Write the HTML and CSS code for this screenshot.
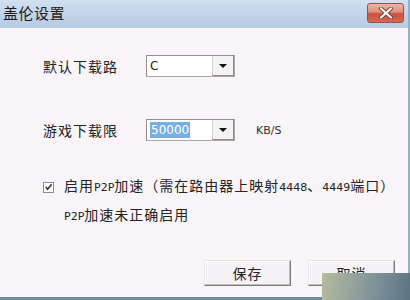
FILE: index.html
```html
<!DOCTYPE html>
<html lang="zh">
<head>
<meta charset="utf-8">
<link rel="stylesheet" href="styles.css">
</head>
<body>
<div class="window">
  <div class="titlebar">
    <span class="title">盖伦设置</span>
    <div class="close">
      <svg width="18" height="12" viewBox="0 0 18 12"><path d="M4 1.5 L14 10.5 M14 1.5 L4 10.5" stroke="#8a3a30" stroke-width="4" stroke-linecap="round"/><path d="M4 1.5 L14 10.5 M14 1.5 L4 10.5" stroke="#ffffff" stroke-width="2.2" stroke-linecap="round"/></svg>
    </div>
  </div>
  <div class="content">
    <div class="row row1">
      <span class="label">默认下载路</span>
      <div class="combo"><span class="value">C</span><span class="drop"><i class="arrow"></i></span></div>
    </div>
    <div class="row row2">
      <span class="label">游戏下载限</span>
      <div class="combo"><span class="value"><span class="sel">50000</span></span><span class="drop"><i class="arrow"></i></span></div>
      <span class="unit">KB/S</span>
    </div>
    <div class="check-row">
      <span class="box"><svg width="10" height="10" viewBox="0 0 10 10"><path d="M2 5 L4 7.5 L8.5 2" stroke="#333" stroke-width="1.8" fill="none"/></svg></span>
      <span class="check-text">启用<span class="lat">P2P</span>加速（需在路由器上映射<span class="lat">4448</span>、<span class="lat">4449</span>端口）</span>
    </div>
    <div class="status"><span class="lat">P2P</span>加速未正确启用</div>
    <div class="buttons">
      <div class="btn">保存</div>
      <div class="btn">取消</div>
    </div>
  </div>
  <div class="watermark"></div>
</div>
</body>
</html>
```
FILE: styles.css
```css
html, body {
  margin: 0;
  padding: 0;
}
body {
  width: 410px;
  height: 300px;
  overflow: hidden;
  font-family: "Noto Sans CJK SC", "Noto Sans", sans-serif;
  color: #222;
}
.window {
  position: relative;
  width: 410px;
  height: 300px;
  box-sizing: border-box;
  background: #f8f4f8;
  border-right: 2px solid #8fb3c9;
  border-bottom: 3px solid #6f8c9c;
  display: flex;
  flex-direction: column;
}
.titlebar {
  height: 28px;
  flex: none;
  display: flex;
  align-items: center;
  justify-content: space-between;
  background: linear-gradient(to bottom, #d2e0f0 0%, #c0d2e8 60%, #b6cae2 100%);
  padding-left: 3px;
}
.title {
  font-size: 15px;
  letter-spacing: 0.5px;
  color: #1c1c1c;
  line-height: 28px;
  margin-top: -2px;
}
.close {
  width: 37px;
  height: 20px;
  margin-right: 4px;
  margin-top: -3px;
  box-sizing: border-box;
  border: 1px solid #9a5048;
  border-radius: 3px;
  background: linear-gradient(to bottom, #eeb4a6 0%, #e08c7a 45%, #c8503c 55%, #d46a54 100%);
  display: flex;
  align-items: center;
  justify-content: center;
}
.content {
  display: flex;
  flex-direction: column;
  padding-left: 43px;
}
.row {
  display: flex;
  align-items: center;
  height: 22px;
}
.row1 { margin-top: 27px; }
.row2 { margin-top: 42px; }
.label {
  width: 103px;
  font-size: 14px;
  letter-spacing: 1px;
  line-height: 22px;
}
.combo {
  width: 89px;
  height: 22px;
  box-sizing: border-box;
  background: #fff;
  border: 1px solid #a9a9a9;
  border-top-color: #8e8e8e;
  border-left-color: #8e8e8e;
  display: flex;
}
.value {
  flex: 1;
  font-family: "DejaVu Sans", "Liberation Sans", sans-serif;
  font-size: 12px;
  line-height: 20px;
  padding-left: 3px;
  color: #222;
}
.sel {
  display: inline-block;
  background: #79aee2;
  color: #fff;
  line-height: 16px;
  padding: 0 1px;
}
.drop {
  width: 22px;
  height: 20px;
  box-sizing: border-box;
  background: #f4f2f4;
  border-left: 1px solid #d0d0d0;
  border-bottom: 1px solid #8a8a8a;
  border-right: 1px solid #8a8a8a;
  display: flex;
  align-items: center;
  justify-content: center;
}
.arrow {
  width: 0;
  height: 0;
  border-left: 4px solid transparent;
  border-right: 4px solid transparent;
  border-top: 4px solid #111;
}
.unit {
  margin-left: 21px;
  font-family: "DejaVu Sans", "Liberation Sans", sans-serif;
  font-size: 11px;
  color: #333;
}
.check-row {
  margin-top: 35px;
  height: 20px;
  display: flex;
  align-items: center;
  width: 346px;
  overflow: hidden;
  white-space: nowrap;
}
.box {
  width: 11px;
  height: 11px;
  flex: none;
  box-sizing: border-box;
  border: 1px solid #8c8c8c;
  background: #fff;
  display: flex;
  align-items: center;
  justify-content: center;
  margin-top: 2px;
}
.check-text {
  margin-left: 10px;
  font-size: 14px;
  letter-spacing: 1px;
  line-height: 20px;
}
.lat {
  font-family: "DejaVu Sans", sans-serif;
  font-size: 11px;
  letter-spacing: 0;
}
.status {
  margin-top: 8px;
  margin-left: 21px;
  font-size: 14px;
  letter-spacing: 1px;
  line-height: 20px;
}
.buttons {
  margin-top: 33px;
  margin-left: 161px;
  display: flex;
  gap: 17px;
}
.btn {
  width: 87px;
  height: 26px;
  box-sizing: border-box;
  background: #f6f2f6;
  border: 1px solid;
  border-color: #e8e8e8 #7c7c7c #7c7c7c #e8e8e8;
  box-shadow: inset -1px -1px 0 #bcbcbc, inset 1px 1px 0 #ffffff;
  display: flex;
  align-items: center;
  justify-content: center;
  font-size: 14px;
  letter-spacing: 1px;
}
.watermark {
  position: absolute;
  right: -2px;
  bottom: -3px;
  width: 88px;
  height: 27px;
  background: linear-gradient(100deg, #b6bc9c 0%, #9aa69e 30%, #7a8e98 65%, #5c7282 100%);
}
```
